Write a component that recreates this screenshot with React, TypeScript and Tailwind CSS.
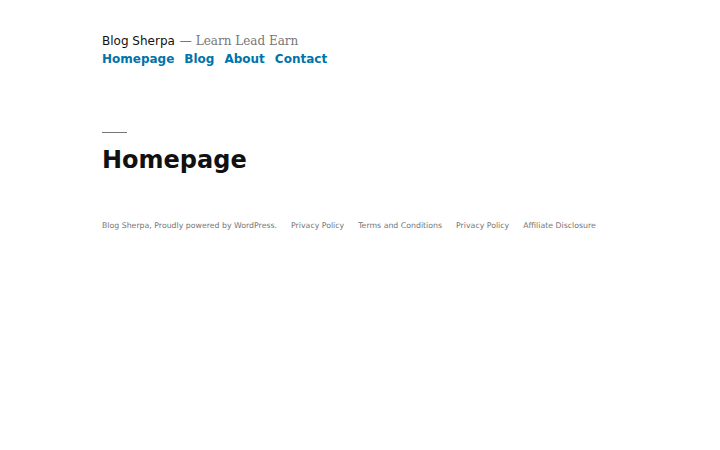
export default function App() {
  const nav = ['Homepage', 'Blog', 'About', 'Contact'];
  const footerLinks = ['Privacy Policy', 'Terms and Conditions', 'Privacy Policy', 'Affiliate Disclosure'];

  return (
    <div className="min-h-[450px] w-[720px] bg-white pl-[102px] font-['DejaVu_Sans',sans-serif] text-[#111]">
      {/* Header */}
      <header className="pt-[33px]">
        <div className="flex items-baseline text-[12px] leading-[16px]">
          <span className="text-[#111]">Blog Sherpa</span>
          <span className="ml-[5px] font-['DejaVu_Serif',serif] text-[#767676]">
            — Learn Lead Earn
          </span>
        </div>
        <nav className="mt-[2px] flex gap-[10px] text-[12px] font-bold leading-[16px] text-[#0073aa]">
          {nav.map((item) => (
            <a key={item} href="#">
              {item}
            </a>
          ))}
        </nav>
      </header>

      {/* Entry */}
      <main className="pt-[65px]">
        <div className="h-[1px] w-[25px] bg-[#767676]" />
        <h1 className="mt-[12px] text-[24px] font-bold leading-[30px] text-[#111]">Homepage</h1>
      </main>

      {/* Footer */}
      <footer className="mt-[45px] flex items-center text-[7.8px] leading-[12px] text-[#767676]">
        <span>Blog Sherpa, Proudly powered by WordPress.</span>
        <div className="ml-[14px] flex gap-[14px]">
          {footerLinks.map((link, i) => (
            <a key={i} href="#">
              {link}
            </a>
          ))}
        </div>
      </footer>
    </div>
  );
}
